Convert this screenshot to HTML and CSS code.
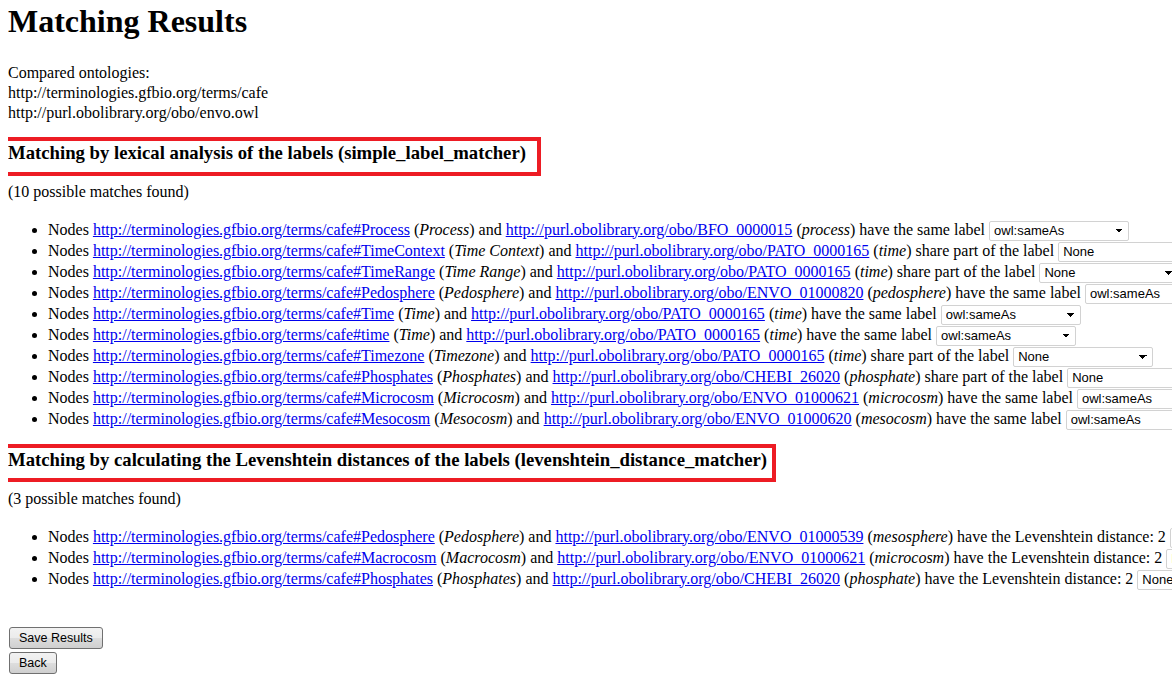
FILE: index.html
```html
<!DOCTYPE html>
<html>
<head>
<meta charset="utf-8">
<title>Matching Results</title>
<link rel="stylesheet" href="styles.css">
</head>
<body>
<h1 class="title">Matching Results</h1>
<p class="compared">Compared ontologies:<br>http://terminologies.gfbio.org/terms/cafe<br>http://purl.obolibrary.org/obo/envo.owl</p>

<h3 class="section-head section-head--lexical">Matching by lexical analysis of the labels (simple_label_matcher)</h3>
<p class="count">(10 possible matches found)</p>
<ul class="matches">
  <li>Nodes <a href="#">http://terminologies.gfbio.org/terms/cafe#Process</a> (<i>Process</i>) and <a href="#">http://purl.obolibrary.org/obo/BFO_0000015</a> (<i>process</i>) have the same label <select class="rel"><option>owl:sameAs</option><option>skos:closeMatch</option><option>None</option></select></li>
  <li>Nodes <a href="#">http://terminologies.gfbio.org/terms/cafe#TimeContext</a> (<i>Time Context</i>) and <a href="#">http://purl.obolibrary.org/obo/PATO_0000165</a> (<i>time</i>) share part of the label <select class="rel"><option>None</option><option>owl:sameAs</option></select></li>
  <li>Nodes <a href="#">http://terminologies.gfbio.org/terms/cafe#TimeRange</a> (<i>Time Range</i>) and <a href="#">http://purl.obolibrary.org/obo/PATO_0000165</a> (<i>time</i>) share part of the label <select class="rel"><option>None</option><option>owl:sameAs</option></select></li>
  <li>Nodes <a href="#">http://terminologies.gfbio.org/terms/cafe#Pedosphere</a> (<i>Pedosphere</i>) and <a href="#">http://purl.obolibrary.org/obo/ENVO_01000820</a> (<i>pedosphere</i>) have the same label <select class="rel"><option>owl:sameAs</option><option>None</option></select></li>
  <li>Nodes <a href="#">http://terminologies.gfbio.org/terms/cafe#Time</a> (<i>Time</i>) and <a href="#">http://purl.obolibrary.org/obo/PATO_0000165</a> (<i>time</i>) have the same label <select class="rel"><option>owl:sameAs</option><option>None</option></select></li>
  <li>Nodes <a href="#">http://terminologies.gfbio.org/terms/cafe#time</a> (<i>Time</i>) and <a href="#">http://purl.obolibrary.org/obo/PATO_0000165</a> (<i>time</i>) have the same label <select class="rel"><option>owl:sameAs</option><option>None</option></select></li>
  <li>Nodes <a href="#">http://terminologies.gfbio.org/terms/cafe#Timezone</a> (<i>Timezone</i>) and <a href="#">http://purl.obolibrary.org/obo/PATO_0000165</a> (<i>time</i>) share part of the label <select class="rel"><option>None</option><option>owl:sameAs</option></select></li>
  <li>Nodes <a href="#">http://terminologies.gfbio.org/terms/cafe#Phosphates</a> (<i>Phosphates</i>) and <a href="#">http://purl.obolibrary.org/obo/CHEBI_26020</a> (<i>phosphate</i>) share part of the label <select class="rel"><option>None</option><option>owl:sameAs</option></select></li>
  <li>Nodes <a href="#">http://terminologies.gfbio.org/terms/cafe#Microcosm</a> (<i>Microcosm</i>) and <a href="#">http://purl.obolibrary.org/obo/ENVO_01000621</a> (<i>microcosm</i>) have the same label <select class="rel"><option>owl:sameAs</option><option>None</option></select></li>
  <li>Nodes <a href="#">http://terminologies.gfbio.org/terms/cafe#Mesocosm</a> (<i>Mesocosm</i>) and <a href="#">http://purl.obolibrary.org/obo/ENVO_01000620</a> (<i>mesocosm</i>) have the same label <select class="rel"><option>owl:sameAs</option><option>None</option></select></li>
</ul>

<h3 class="section-head section-head--lev">Matching by calculating the Levenshtein distances of the labels (levenshtein_distance_matcher)</h3>
<p class="count count--lev">(3 possible matches found)</p>
<ul class="matches">
  <li>Nodes <a href="#">http://terminologies.gfbio.org/terms/cafe#Pedosphere</a> (<i>Pedosphere</i>) and <a href="#">http://purl.obolibrary.org/obo/ENVO_01000539</a> (<i>mesosphere</i>) have the Levenshtein distance: 2 <select class="rel"><option>None</option><option>owl:sameAs</option></select></li>
  <li>Nodes <a href="#">http://terminologies.gfbio.org/terms/cafe#Macrocosm</a> (<i>Macrocosm</i>) and <a href="#">http://purl.obolibrary.org/obo/ENVO_01000621</a> (<i>microcosm</i>) have the Levenshtein distance: 2 <select class="rel"><option>None</option><option>owl:sameAs</option></select></li>
  <li>Nodes <a href="#">http://terminologies.gfbio.org/terms/cafe#Phosphates</a> (<i>Phosphates</i>) and <a href="#">http://purl.obolibrary.org/obo/CHEBI_26020</a> (<i>phosphate</i>) have the Levenshtein distance: 2 <select class="rel"><option>None</option><option>owl:sameAs</option></select></li>
</ul>

<div class="actions">
  <button class="btn" type="button">Save Results</button>
  <button class="btn" type="button">Back</button>
</div>
</body>
</html>
```

FILE: styles.css
```css
html {
  overflow: hidden;
}

body {
  margin: 0 0 0 8px;
  padding-top: 3px;
  font-family: "Liberation Serif", "Times New Roman", serif;
  font-size: 16px;
  color: #000;
  background: #fff;
}

.title {
  margin: 0;
  font-size: 32px;
  line-height: 37px;
  font-weight: bold;
}

.compared {
  margin: 23px 0 0;
  line-height: 20px;
}

.section-head {
  display: inline-block;
  margin: 14px 0 0 -6px;
  border: 4px solid #ed1c24;
  padding: 1px 11px 8px 2px;
  font-size: 18.72px;
  line-height: 22px;
  font-weight: bold;
  white-space: nowrap;
}

.section-head--lev {
  margin-top: 15.5px;
  padding: 1px 5px 7px 2px;
}

.count {
  margin: 6px 0 0;
  line-height: 20px;
}

.count--lev {
  margin-top: 7px;
}

.matches {
  margin: 16.5px 0 0;
  padding-left: 40px;
}

.matches li {
  height: 21px;
  line-height: 21px;
  white-space: nowrap;
}

.matches a {
  color: #0000ee;
}

.rel {
  -webkit-appearance: none;
  appearance: none;
  box-sizing: border-box;
  width: 140px;
  height: 20px;
  margin: 0;
  padding: 0 16px 0 4px;
  vertical-align: middle;
  border: 1px solid #d2d2d2;
  border-radius: 2px;
  font-family: "Liberation Sans", Arial, sans-serif;
  font-size: 13px;
  color: #000;
  background-color: #fff;
  background-image:
    linear-gradient(45deg, transparent 50%, #000 50%),
    linear-gradient(135deg, #000 50%, transparent 50%);
  background-position: right 9px center, right 5px center;
  background-size: 4px 4px, 4px 4px;
  background-repeat: no-repeat;
}

.actions {
  margin-top: 38.5px;
  display: flex;
  flex-direction: column;
  align-items: flex-start;
  gap: 3px;
}

.btn {
  margin: 0 0 0 1px;
  height: 22px;
  padding: 0 9px;
  border: 1px solid #707070;
  border-radius: 3px;
  background: linear-gradient(#f2f2f2 0%, #ebebeb 50%, #dddddd 51%, #cfcfcf 100%);
  font-family: "Liberation Sans", Arial, sans-serif;
  font-size: 12.5px;
  color: #000;
}
```
